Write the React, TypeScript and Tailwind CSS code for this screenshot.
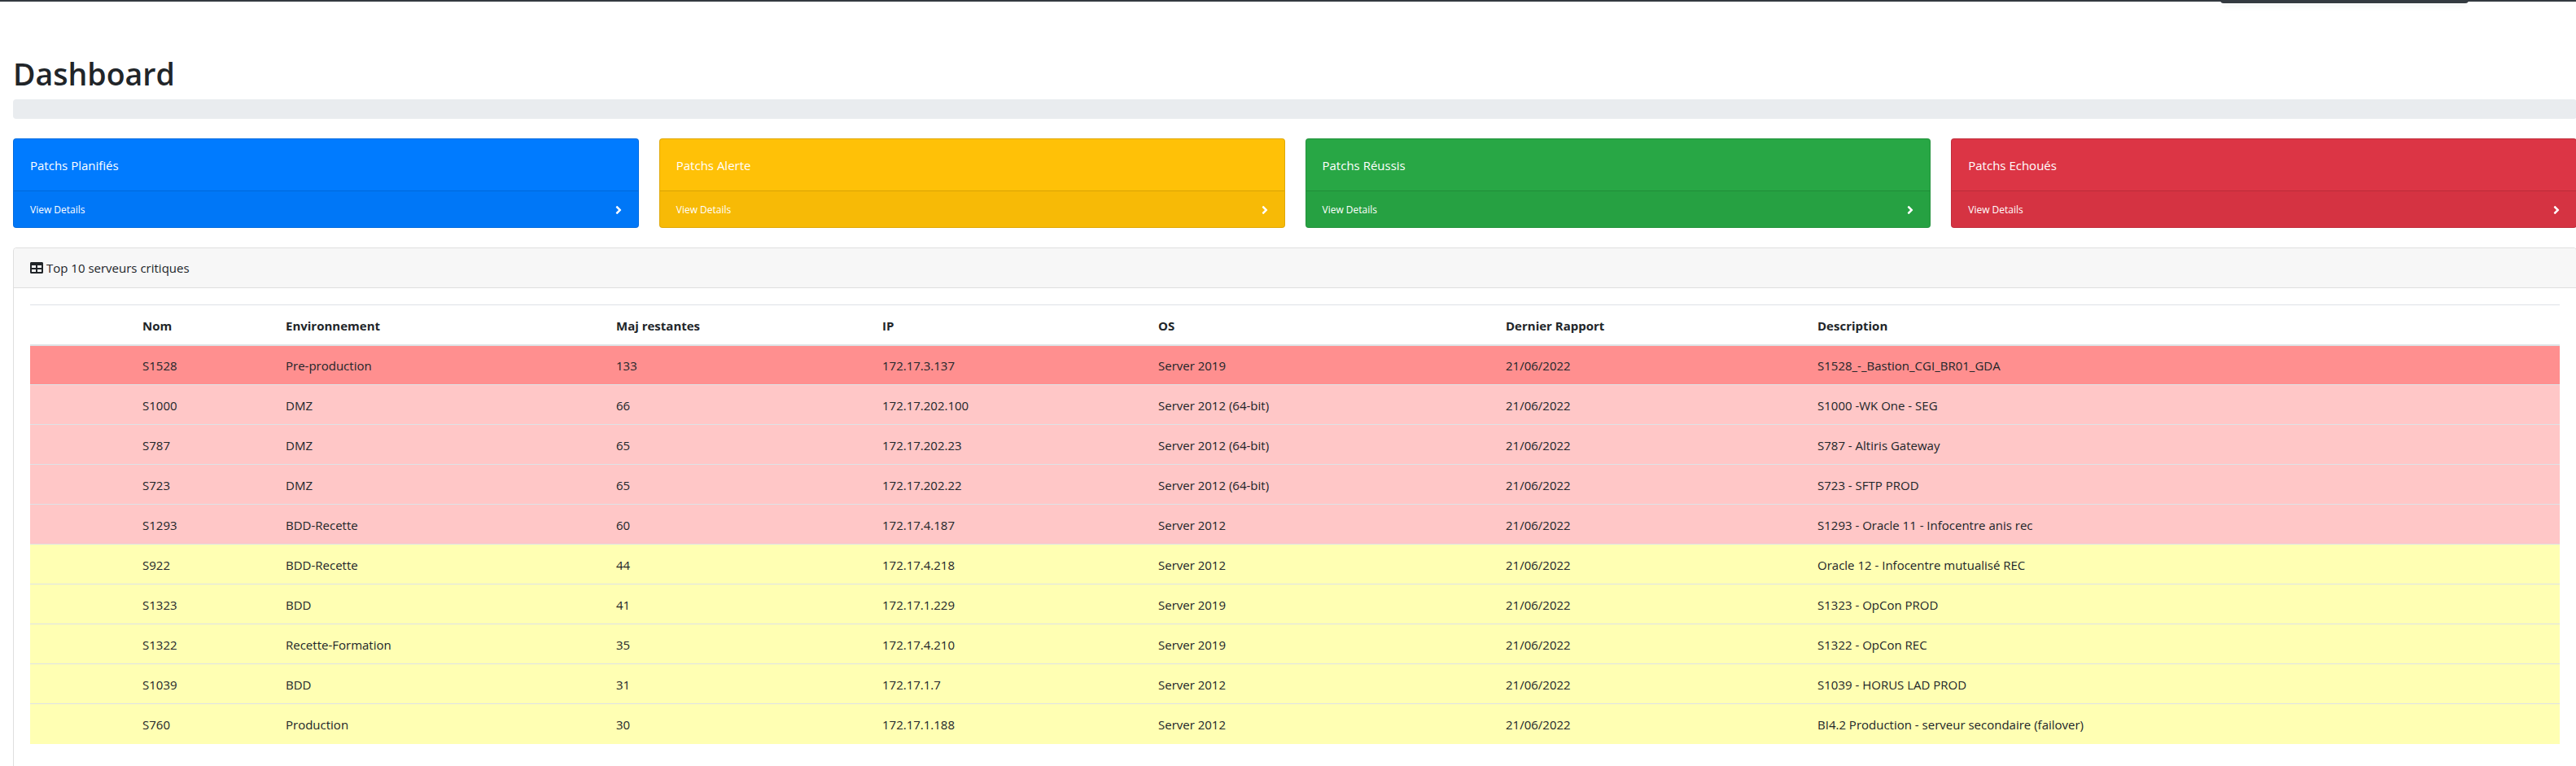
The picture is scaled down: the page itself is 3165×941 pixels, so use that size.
import { FaAngleRight, FaTable } from "react-icons/fa";

const summaryCards = [
    { title: "Patchs Planifiés", card: "bg-[#007bff]" },
    { title: "Patchs Alerte", card: "bg-[#ffc107]" },
    { title: "Patchs Réussis", card: "bg-[#28a745]" },
    { title: "Patchs Echoués", card: "bg-[#dc3545]" },
];

const columns = [
    { label: "", width: "w-[126px]" },
    { label: "Nom", width: "w-[176px]" },
    { label: "Environnement", width: "w-[406px]" },
    { label: "Maj restantes", width: "w-[327px]" },
    { label: "IP", width: "w-[339px]" },
    { label: "OS", width: "w-[427px]" },
    { label: "Dernier Rapport", width: "w-[383px]" },
    { label: "Description", width: "w-[924px]" },
];

const servers = [
    { nom: "S1528", env: "Pre-production", maj: 133, ip: "172.17.3.137", os: "Server 2019", desc: "S1528_-_Bastion_CGI_BR01_GDA", bg: "bg-[#ff8f8f]" },
    { nom: "S1000", env: "DMZ", maj: 66, ip: "172.17.202.100", os: "Server 2012 (64-bit)", desc: "S1000 -WK One - SEG", bg: "bg-[#ffc7c7]" },
    { nom: "S787", env: "DMZ", maj: 65, ip: "172.17.202.23", os: "Server 2012 (64-bit)", desc: "S787 - Altiris Gateway", bg: "bg-[#ffc7c7]" },
    { nom: "S723", env: "DMZ", maj: 65, ip: "172.17.202.22", os: "Server 2012 (64-bit)", desc: "S723 - SFTP PROD", bg: "bg-[#ffc7c7]" },
    { nom: "S1293", env: "BDD-Recette", maj: 60, ip: "172.17.4.187", os: "Server 2012", desc: "S1293 - Oracle 11 - Infocentre anis rec", bg: "bg-[#ffc7c7]" },
    { nom: "S922", env: "BDD-Recette", maj: 44, ip: "172.17.4.218", os: "Server 2012", desc: "Oracle 12 - Infocentre mutualisé REC", bg: "bg-[#ffffb3]" },
    { nom: "S1323", env: "BDD", maj: 41, ip: "172.17.1.229", os: "Server 2019", desc: "S1323 - OpCon PROD", bg: "bg-[#ffffb3]" },
    { nom: "S1322", env: "Recette-Formation", maj: 35, ip: "172.17.4.210", os: "Server 2019", desc: "S1322 - OpCon REC", bg: "bg-[#ffffb3]" },
    { nom: "S1039", env: "BDD", maj: 31, ip: "172.17.1.7", os: "Server 2012", desc: "S1039 - HORUS LAD PROD", bg: "bg-[#ffffb3]" },
    { nom: "S760", env: "Production", maj: 30, ip: "172.17.1.188", os: "Server 2012", desc: "BI4.2 Production - serveur secondaire (failover)", bg: "bg-[#ffffb3]" },
];

const SummaryCard = ({ title, card }: { title: string; card: string }) => (
    <div className={`flex h-[110px] flex-col overflow-hidden rounded border border-black/[0.125] text-white ${card}`}>
        <div className="flex flex-1 items-center px-5 pt-[2px] text-[15px]">{title}</div>
        <div className="flex h-[45px] items-center justify-between border-t border-black/[0.125] bg-black/3 px-5 pt-[1px] text-xs">
            <span>View Details</span>
            <FaAngleRight className="h-4 w-2" />
        </div>
    </div>
);

export default function App() {
    return (
        <div className="h-screen overflow-hidden bg-white font-['Open_Sans',sans-serif] text-[15px] text-[#212529]">
            <div className="relative h-[2px] bg-[#343a40]">
                <div className="absolute left-[2728px] top-0 h-[4px] w-[305px] rounded-b-sm bg-[#343a40] shadow-md"></div>
            </div>
            <div className="w-[3166px] pl-4 pt-[65px]">
                <h1 className="h-[48px] text-[37.5px] leading-[48px] font-semibold">Dashboard</h1>
                <div className="mt-[7px] h-6 rounded bg-[#e9ecef]"></div>
                <div className="mt-6 grid grid-cols-4 gap-[25px]">
                    {summaryCards.map((item) => (
                        <SummaryCard key={item.title} {...item} />
                    ))}
                </div>
                <div className="mt-6 rounded border border-[#dfdfdf]">
                    <div className="flex h-[49px] items-center gap-1 rounded-t border-b border-[#dfdfdf] bg-[#f7f7f7] px-5">
                        <FaTable className="h-4 w-4" />
                        <span>Top 10 serveurs critiques</span>
                    </div>
                    <div className="px-5 pb-9 pt-5">
                        <table className="w-full table-fixed border-collapse text-left">
                            <colgroup>
                                {columns.map((col, i) => (
                                    <col key={i} className={col.width} />
                                ))}
                            </colgroup>
                            <thead>
                                <tr>
                                    {columns.map((col, i) => (
                                        <th key={i} className="h-[49px] border-t border-b-2 border-[#dee2e6] px-3 pt-[2px] font-bold">
                                            {col.label}
                                        </th>
                                    ))}
                                </tr>
                            </thead>
                            <tbody>
                                {servers.map((s) => (
                                    <tr key={s.nom} className={s.bg}>
                                        <td className="h-[49px] border-t border-[#dee2e6] px-3 pt-[2px]"></td>
                                        <td className="border-t border-[#dee2e6] px-3 pt-[2px]">{s.nom}</td>
                                        <td className="border-t border-[#dee2e6] px-3 pt-[2px]">{s.env}</td>
                                        <td className="border-t border-[#dee2e6] px-3 pt-[2px]">{s.maj}</td>
                                        <td className="border-t border-[#dee2e6] px-3 pt-[2px]">{s.ip}</td>
                                        <td className="border-t border-[#dee2e6] px-3 pt-[2px]">{s.os}</td>
                                        <td className="border-t border-[#dee2e6] px-3 pt-[2px]">21/06/2022</td>
                                        <td className="border-t border-[#dee2e6] px-3 pt-[2px]">{s.desc}</td>
                                    </tr>
                                ))}
                            </tbody>
                        </table>
                    </div>
                </div>
            </div>
        </div>
    );
}
